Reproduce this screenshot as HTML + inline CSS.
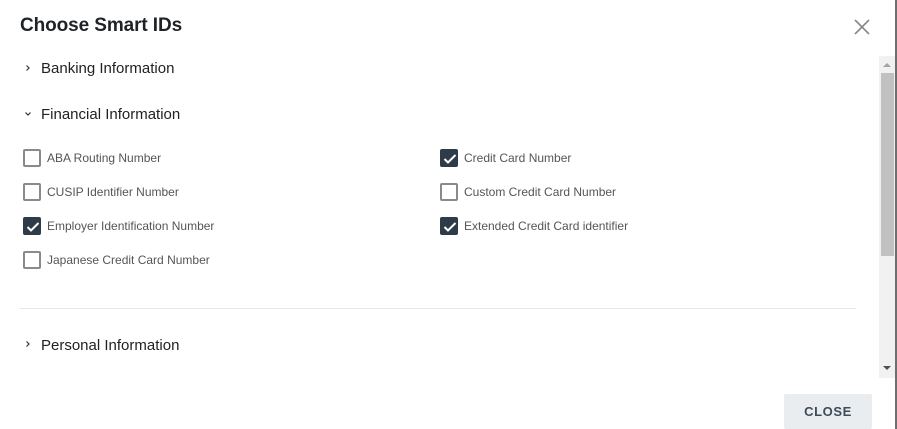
<!DOCTYPE html>
<html><head><meta charset="utf-8"><style>
*{margin:0;padding:0;box-sizing:border-box}
body{width:897px;height:429px;background:#fff;font-family:"Liberation Sans",Arial,sans-serif;position:relative;overflow:hidden}
.a{position:absolute}
.title{left:20px;top:15px;font-size:19px;color:#1f2328;font-weight:bold;letter-spacing:-0.1px}
.sec{font-size:15px;color:#222;left:41px}
.cb{width:18px;height:18px;border:2px solid #8a8a8a;border-radius:2px;background:#fff}
.cb.on{background:#2e3b48;border-color:#2e3b48}
.cb.on svg{position:absolute;left:1px;top:1px}
.lbl{font-size:12px;color:#555}
</style></head><body>
<div class="a title">Choose Smart IDs</div>
<svg class="a" style="left:854px;top:19px" width="16" height="16" viewBox="0 0 16 16"><path d="M1 1L15 15M15 1L1 15" stroke="#888" stroke-width="1.6"/></svg>

<svg class="a" style="left:24px;top:64px" width="8" height="8" viewBox="0 0 8 8"><path d="M2.5 1.5L5 4L2.5 6.5" stroke="#333" stroke-width="1.2" fill="none"/></svg>
<div class="a sec" style="top:60px">Banking Information</div>
<svg class="a" style="left:24px;top:110px" width="8" height="8" viewBox="0 0 8 8"><path d="M1.5 2.5L4 5L6.5 2.5" stroke="#333" stroke-width="1.2" fill="none"/></svg>
<div class="a sec" style="top:106px">Financial Information</div>

<div class="a cb" style="left:23px;top:149px"></div><div class="a lbl" style="left:47px;top:151px">ABA Routing Number</div>
<div class="a cb" style="left:23px;top:183px"></div><div class="a lbl" style="left:47px;top:185px">CUSIP Identifier Number</div>
<div class="a cb on" style="left:23px;top:217px"><svg width="14" height="14" viewBox="0 0 14 14"><path d="M1.5 7L5 10.5L12.5 3" stroke="#fff" stroke-width="2" fill="none"/></svg></div><div class="a lbl" style="left:47px;top:219px">Employer Identification Number</div>
<div class="a cb" style="left:23px;top:251px"></div><div class="a lbl" style="left:47px;top:253px">Japanese Credit Card Number</div>

<div class="a cb on" style="left:440px;top:149px"><svg width="14" height="14" viewBox="0 0 14 14"><path d="M1.5 7L5 10.5L12.5 3" stroke="#fff" stroke-width="2" fill="none"/></svg></div><div class="a lbl" style="left:464px;top:151px">Credit Card Number</div>
<div class="a cb" style="left:440px;top:183px"></div><div class="a lbl" style="left:464px;top:185px">Custom Credit Card Number</div>
<div class="a cb on" style="left:440px;top:217px"><svg width="14" height="14" viewBox="0 0 14 14"><path d="M1.5 7L5 10.5L12.5 3" stroke="#fff" stroke-width="2" fill="none"/></svg></div><div class="a lbl" style="left:464px;top:219px">Extended Credit Card identifier</div>

<div class="a" style="left:20px;top:308px;width:836px;height:1px;background:#e6e6e6"></div>
<svg class="a" style="left:24px;top:340px" width="8" height="8" viewBox="0 0 8 8"><path d="M2.5 1.5L5 4L2.5 6.5" stroke="#333" stroke-width="1.2" fill="none"/></svg>
<div class="a sec" style="top:337px">Personal Information</div>

<div class="a" style="left:879px;top:56px;width:16px;height:322px;background:#f1f1f1"></div>
<div class="a" style="left:881px;top:73px;width:13px;height:183px;background:#c1c1c1"></div>
<svg class="a" style="left:883px;top:62px" width="8" height="5"><path d="M0 5L4 1L8 5Z" fill="#a3a3a3"/></svg>
<svg class="a" style="left:883px;top:366px" width="8" height="5"><path d="M0 0L4 4L8 0Z" fill="#505050"/></svg>
<div class="a" style="left:895px;top:0;width:2px;height:429px;background:#6e6e6e"></div>

<div class="a" style="left:784px;top:394px;width:88px;height:35px;background:#e9edf0;border-radius:2px;color:#3d4b5a;font-size:13px;font-weight:bold;text-align:center;line-height:35px;letter-spacing:0.6px">CLOSE</div>
</body></html>
